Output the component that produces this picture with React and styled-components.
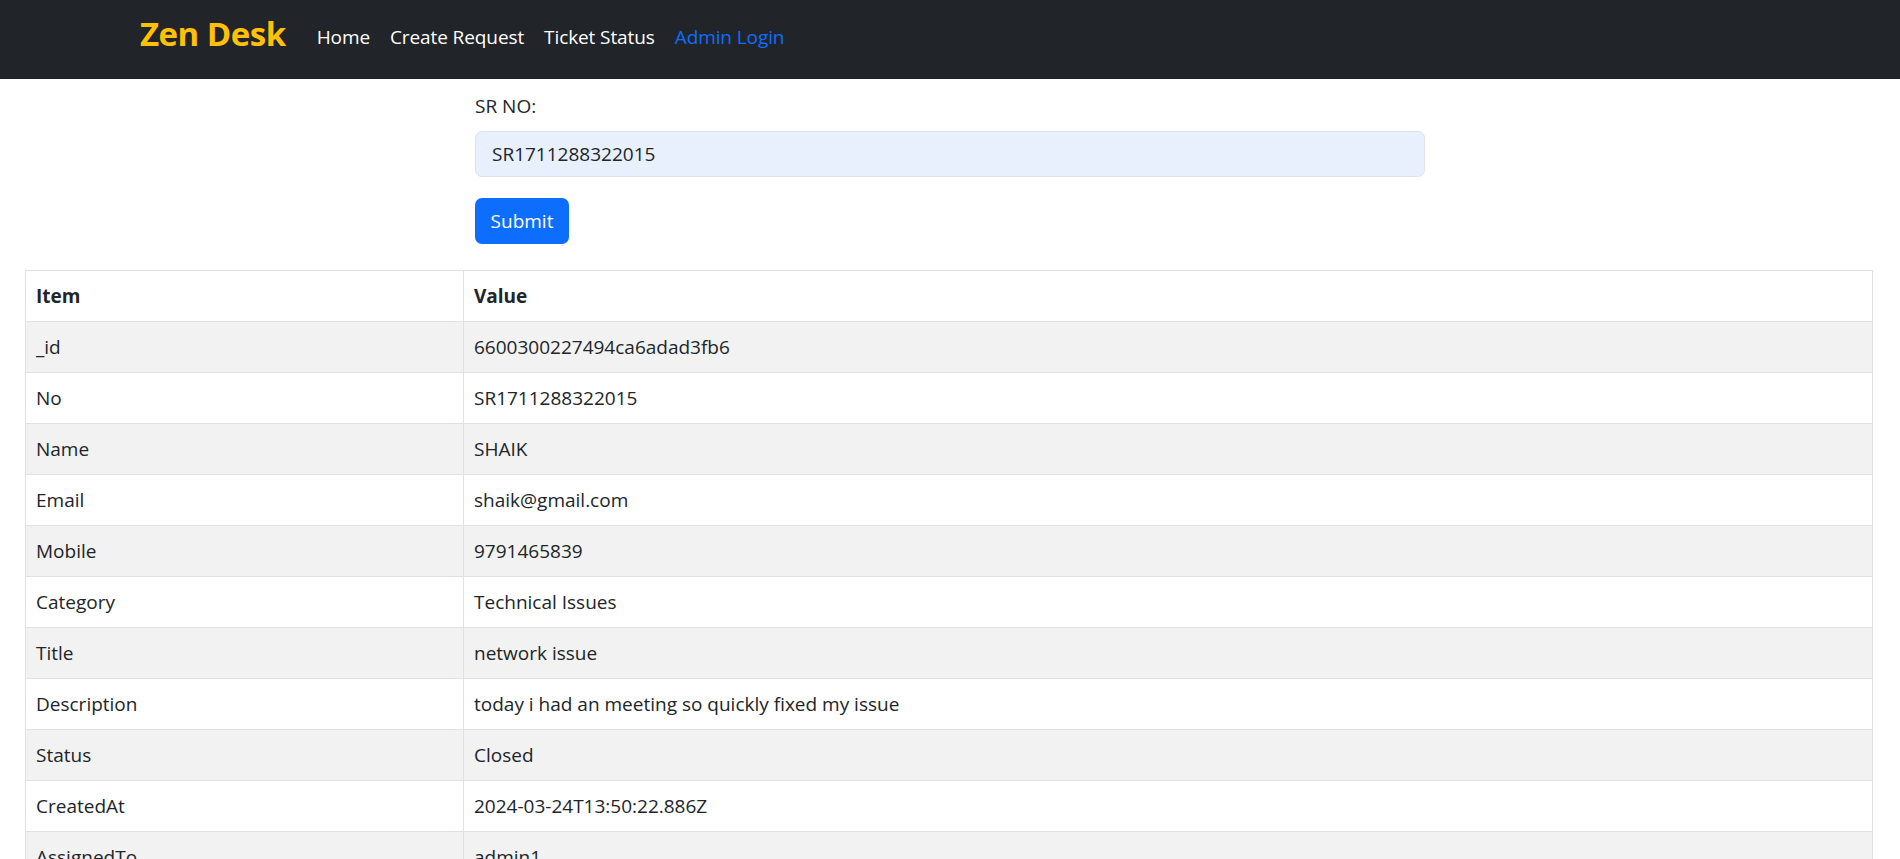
import React from 'react'
import styled, { createGlobalStyle } from "styled-components"

const Global = createGlobalStyle`
  body {
    margin:0;
    font-family:"Open Sans", "Noto Sans", sans-serif;
    color:#212529;
    background:#fff;
  }
  * { box-sizing:border-box; }
`
const Nav = styled.nav`
  height:79px;
  background-color:#212529;
  display:flex;
  align-items:flex-start;
  padding:9px 0 0 140px;
`
const Brand = styled.a`
  font-size:33px;
  font-weight:700;
  color:#ffc107;
  line-height:50px;
  margin-right:21px;
  letter-spacing:-0.5px;
`
const NavList = styled.div`
  display:flex;
  padding-top:10px;
`
const NavLink = styled.a`
  font-size:19px;
  line-height:36px;
  padding:0 10px;
  color:${p => p.$active ? "#0d6efd" : "#fff"};
  letter-spacing:-0.1px;
`
const Form = styled.form`
  width:950px;
  margin:0 auto;
  padding-top:12px;
  display:flex;
  flex-direction:column;
  align-items:flex-start;
`
const Label = styled.label`
  font-size:19px;
  line-height:30px;
  margin-bottom:10px;
`
const Input = styled.input`
  width:100%;
  height:46px;
  padding:0 16px;
  font-family:inherit;
  font-size:19px;
  color:#212529;
  background:#e8f0fe;
  border:1px solid #dee2e6;
  border-radius:7px;
  outline:none;
  margin-bottom:21px;
`
const Button = styled.button`
  width:94px;
  height:46px;
  font-family:inherit;
  font-size:19px;
  color:#fff;
  background:#0d6efd;
  border:none;
  border-radius:7px;
  cursor:pointer;
`
const Table = styled.table`
  margin:26px 27px 0 25px;
  width:calc(100% - 52px);
  border-collapse:collapse;
  font-size:19px;
`
const Cell = styled.td`
  border:1px solid #dee2e6;
  padding:10px;
  height:51px;
  line-height:30px;
  font-weight:${p => p.$head ? 700 : 400};
  &:first-child { width:438px; }
`
const Row = styled.tr`
  background:${p => p.$striped ? "#f2f2f2" : "#fff"};
`

const data = [
  ["_id", "6600300227494ca6adad3fb6"],
  ["No", "SR1711288322015"],
  ["Name", "SHAIK"],
  ["Email", "shaik@gmail.com"],
  ["Mobile", "9791465839"],
  ["Category", "Technical Issues"],
  ["Title", "network issue"],
  ["Description", "today i had an meeting so quickly fixed my issue"],
  ["Status", "Closed"],
  ["CreatedAt", "2024-03-24T13:50:22.886Z"],
  ["AssignedTo", "admin1"],
  ["Solution", "restarted the router"],
  ["__v", "0"],
]

const App = () => {
  return (
    <>
      <Global />
      <Nav>
        <Brand>Zen Desk</Brand>
        <NavList>
          <NavLink>Home</NavLink>
          <NavLink>Create Request</NavLink>
          <NavLink>Ticket Status</NavLink>
          <NavLink $active>Admin Login</NavLink>
        </NavList>
      </Nav>

      <Form onSubmit={e => e.preventDefault()}>
        <Label>SR NO:</Label>
        <Input defaultValue="SR1711288322015" />
        <Button type="submit">Submit</Button>
      </Form>

      <Table>
        <tbody>
          <Row>
            <Cell $head>Item</Cell>
            <Cell $head>Value</Cell>
          </Row>
          {data.map(([k, v], i) => (
            <Row key={k} $striped={i % 2 === 0}>
              <Cell>{k}</Cell>
              <Cell>{v}</Cell>
            </Row>
          ))}
        </tbody>
      </Table>
    </>
  )
}

export default App
